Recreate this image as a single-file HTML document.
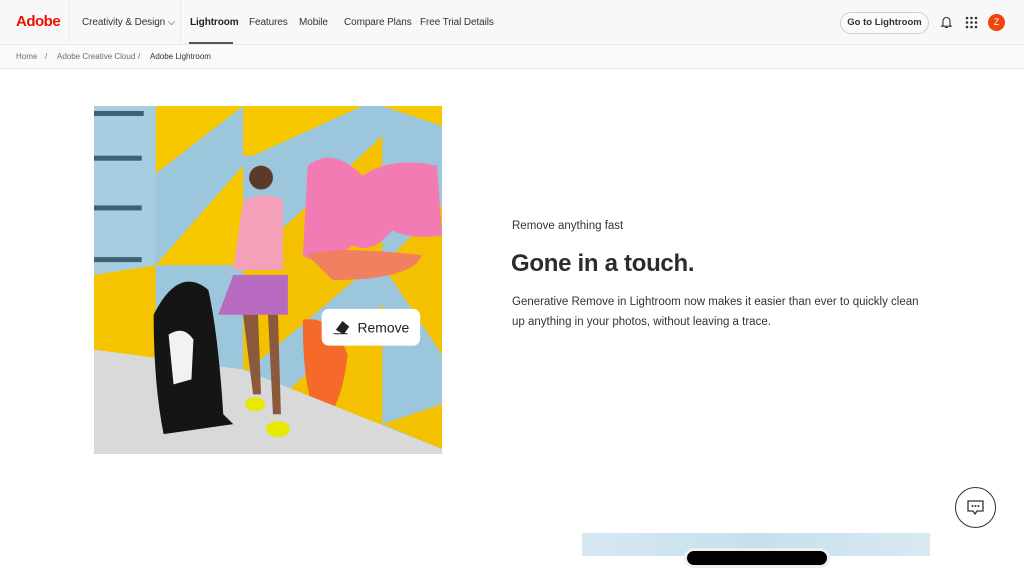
<!DOCTYPE html>
<html><head><meta charset="utf-8"><style>
*{margin:0;padding:0;box-sizing:border-box}
body{width:1024px;height:556px;overflow:hidden;background:#fff;font-family:"Liberation Sans",sans-serif;color:#2c2c2c;position:relative}
.nav{position:absolute;left:0;top:0;width:1024px;height:45px;background:#f8f8f8;border-bottom:1px solid #e8e8e8}
.nav span{position:absolute;top:17px;font-size:10px;color:#333;white-space:nowrap;letter-spacing:-0.1px}
.crumb{position:absolute;left:0;top:45px;width:1024px;height:24px;background:#fafafa;border-bottom:1px solid #e6e6e6}
.crumb span{position:absolute;top:7px;font-size:8px;color:#6e6e6e;white-space:nowrap}
.t{position:absolute;white-space:nowrap}
</style></head><body>
<div class="nav">
  <span style="left:16px;top:13px;font-size:15px;font-weight:bold;color:#eb1000;letter-spacing:-0.5px">Adobe</span>
  <div style="position:absolute;left:69px;top:0;width:1px;height:45px;background:#ebebeb"></div>
  <span style="left:82px">Creativity &amp; Design ⌵</span>
  <div style="position:absolute;left:180px;top:0;width:1px;height:45px;background:#ebebeb"></div>
  <span style="left:190px;font-weight:bold;color:#222">Lightroom</span>
  <div style="position:absolute;left:189px;top:42px;width:44px;height:2px;background:#555"></div>
  <span style="left:249px">Features</span>
  <span style="left:299px">Mobile</span>
  <span style="left:344px">Compare Plans</span>
  <span style="left:420px">Free Trial Details</span>
  <div style="position:absolute;left:840px;top:12px;width:89px;height:22px;border:1px solid #cfcfcf;border-radius:11px;background:#fafafa;font-size:9.5px;font-weight:bold;text-align:center;line-height:20px;color:#333">Go to Lightroom</div>
  <svg style="position:absolute;left:940px;top:15px" width="13" height="14" viewBox="0 0 13 14"><path d="M3 10V6a3.5 3.5 0 017 0v4l1.2 1.2H1.8z M5 12.5h3" fill="none" stroke="#333" stroke-width="1.1"/></svg>
  <svg style="position:absolute;left:965px;top:16px" width="13" height="13"><g fill="#333"><circle cx="2" cy="2" r="1.3"/><circle cx="6.5" cy="2" r="1.3"/><circle cx="11" cy="2" r="1.3"/><circle cx="2" cy="6.5" r="1.3"/><circle cx="6.5" cy="6.5" r="1.3"/><circle cx="11" cy="6.5" r="1.3"/><circle cx="2" cy="11" r="1.3"/><circle cx="6.5" cy="11" r="1.3"/><circle cx="11" cy="11" r="1.3"/></g></svg>
  <div style="position:absolute;left:988px;top:14px;width:17px;height:17px;border-radius:50%;background:#f1440f;color:#fff;font-size:9px;text-align:center;line-height:17px">Z</div>
</div>
<div class="crumb">
  <span style="left:16px">Home</span><span style="left:45px">/</span>
  <span style="left:57px">Adobe Creative Cloud</span><span style="left:138px">/</span>
  <span style="left:150px;color:#333">Adobe Lightroom</span>
</div>

<svg style="position:absolute;left:94px;top:106px" width="348" height="348" viewBox="0 0 350 350">
  <rect width="350" height="350" fill="#9cc6dc"/>
  <polygon points="62,0 150,0 62,68" fill="#f7c800"/>
  <polygon points="150,50 150,0 270,0 160,50" fill="#f7c800"/>
  <polygon points="290,0 350,0 350,20" fill="#f7c800"/>
  <polygon points="62,160 150,60 150,160" fill="#f7c800"/>
  <polygon points="150,160 290,30 290,160" fill="#f4c100"/>
  <polygon points="290,160 350,100 350,250" fill="#f4c100"/>
  <polygon points="150,270 150,160 280,160" fill="#f4c100"/>
  <polygon points="180,300 290,200 290,320" fill="#f4c100"/>
  <polygon points="290,320 350,300 350,345" fill="#f4c100"/>
  <rect x="0" y="0" width="62" height="250" fill="#a6cde0"/>
  <polygon points="0,170 62,160 62,255 0,245" fill="#f5c400"/>
  <g fill="#3e6070"><rect x="0" y="5" width="50" height="5"/><rect x="0" y="50" width="48" height="5"/><rect x="0" y="100" width="48" height="5"/><rect x="0" y="152" width="48" height="5"/></g>
  <path d="M215 60 Q240 40 270 70 Q300 50 345 60 L350 130 Q320 135 300 125 Q280 150 260 140 Q230 165 210 150 Z" fill="#f37bb4"/>
  <path d="M215 150 Q240 140 330 150 Q320 175 240 175 Z" fill="#f08060"/>
  <path d="M210 215 Q240 210 255 250 Q250 300 230 320 Q210 300 210 215 Z" fill="#f56a2a"/>
  <polygon points="0,245 150,265 350,345 350,350 0,350" fill="#d8d9d8"/>
  <path d="M150 95 Q175 85 190 95 L190 165 L140 165 Z" fill="#f3a0b8"/>
  <path d="M140 170 L195 170 L195 210 L125 210 Z" fill="#b86ac0"/>
  <path d="M150 210 L160 290 L168 290 L165 210 Z M175 210 L180 310 L188 310 L185 210 Z" fill="#8b5a3c"/>
  <ellipse cx="185" cy="325" rx="12" ry="8" fill="#e8e800"/>
  <ellipse cx="162" cy="300" rx="10" ry="7" fill="#e8e800"/>
  <circle cx="168" cy="72" r="12" fill="#5a3a28"/>
  <path d="M60 210 Q85 160 115 185 Q125 230 130 310 L140 320 L70 330 Q60 280 60 210 Z" fill="#151515"/>
  <path d="M75 230 Q90 220 100 235 L98 275 L80 280 Z" fill="#f2f2f2"/>
  <rect x="229" y="204" width="99" height="37" rx="7" fill="#fff"/>
  <text x="265" y="228" font-family="Liberation Sans,sans-serif" font-size="14" fill="#222">Remove</text>
  <path d="M244 225 l6 -8 l6 5 l-5 7 z M241 229 h14" fill="#222" stroke="#222" stroke-width="1"/>
</svg>

<div class="t" style="left:512px;top:220px;font-size:11.5px;color:#333">Remove anything fast</div>
<div class="t" style="left:511px;top:250px;font-size:24px;font-weight:bold;color:#2c2c2c;letter-spacing:-0.3px">Gone in a touch.</div>
<div class="t" style="left:512px;top:292px;font-size:11.5px;line-height:20px;color:#333;letter-spacing:0">Generative Remove in Lightroom now makes it easier than ever to quickly clean<br>up anything in your photos, without leaving a trace.</div>

<div style="position:absolute;left:582px;top:533px;width:348px;height:23px;background:linear-gradient(90deg,#d6e8f2,#c6e0ee,#d8e9f2)"></div>
<div style="position:absolute;left:684px;top:548px;width:146px;height:20px;border-radius:14px;background:#000;border:3px solid #eee"></div>

<div style="position:absolute;left:955px;top:487px;width:41px;height:41px;border-radius:50%;border:1.5px solid #333;background:#fff"></div>
<svg style="position:absolute;left:966px;top:500px" width="19" height="17" viewBox="0 0 19 17"><path d="M2 1h15v10H11l-2 3-2-3H2z" fill="none" stroke="#333" stroke-width="1.3"/><circle cx="6.5" cy="6" r="1" fill="#333"/><circle cx="9.5" cy="6" r="1" fill="#333"/><circle cx="12.5" cy="6" r="1" fill="#333"/></svg>
</body></html>
